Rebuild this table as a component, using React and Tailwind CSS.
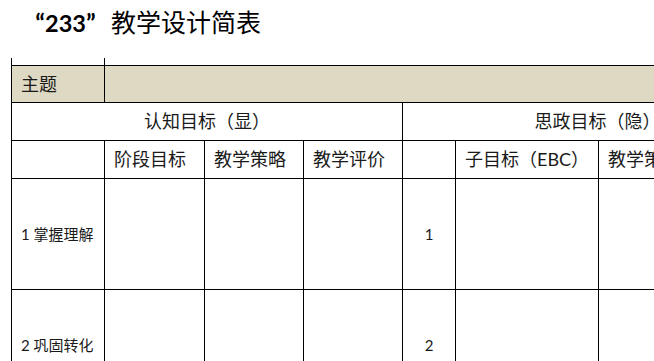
export default function App() {
  const font = { fontFamily: 'Lato, "Noto Sans CJK SC", sans-serif' };
  const cell = "bg-white flex items-center text-[#1a1a1a]";
  const big = `${cell} text-[18px]`;
  const small = `${cell} text-[15px]`;
  return (
    <div className="w-[654px] h-[361px] overflow-hidden bg-white relative" style={font}>
      <div className="h-[58px] pl-[20px] pt-[5px] text-[25px] leading-[32px] text-black flex items-baseline">
        <span className="inline-block w-[25px] text-right font-bold">“</span>
        <span className="font-bold text-[23.5px]">233</span>
        <span className="inline-block w-[25px] text-left font-bold">”</span>
        <span style={{ fontFamily: '"Noto Sans CJK SC", sans-serif' }}>教学设计简表</span>
      </div>
      <div className="h-[7px] flex">
        <div className="ml-[11px] w-px bg-black" />
        <div className="ml-[92px] w-px bg-black" />
      </div>
      <div className="ml-[11px] w-[1000px] bg-black p-px">
        <div className="grid gap-px grid-cols-[92px_99px_98px_98px_52px_142px_193px_120px] grid-rows-[36px_37px_37px_110px_110px]">
          <div className="bg-[#ddd9c3] flex items-center pl-[9px] text-[18px] text-[#1a1a1a]">主题</div>
          <div className="bg-[#ddd9c3] col-span-7" />

          <div className={`${big} col-span-4 justify-center`}>认知目标（显）</div>
          <div className={`${big} col-span-3 justify-center`}>思政目标（隐）</div>
          <div className={cell} />

          <div className={cell} />
          <div className={`${big} pl-[9px]`}>阶段目标</div>
          <div className={`${big} pl-[9px]`}>教学策略</div>
          <div className={`${big} pl-[9px]`}>教学评价</div>
          <div className={cell} />
          <div className={`${big} pl-[9px]`}>子目标（EBC）</div>
          <div className={`${big} pl-[9px]`}>教学策略</div>
          <div className={cell} />

          <div className={`${small} pl-[9px]`}>1 掌握理解</div>
          <div className={cell} />
          <div className={cell} />
          <div className={cell} />
          <div className={`${small} justify-center`}>1</div>
          <div className={cell} />
          <div className={cell} />
          <div className={cell} />

          <div className={`${small} pl-[9px]`}>2 巩固转化</div>
          <div className={cell} />
          <div className={cell} />
          <div className={cell} />
          <div className={`${small} justify-center`}>2</div>
          <div className={cell} />
          <div className={cell} />
          <div className={cell} />
        </div>
      </div>
    </div>
  );
}
